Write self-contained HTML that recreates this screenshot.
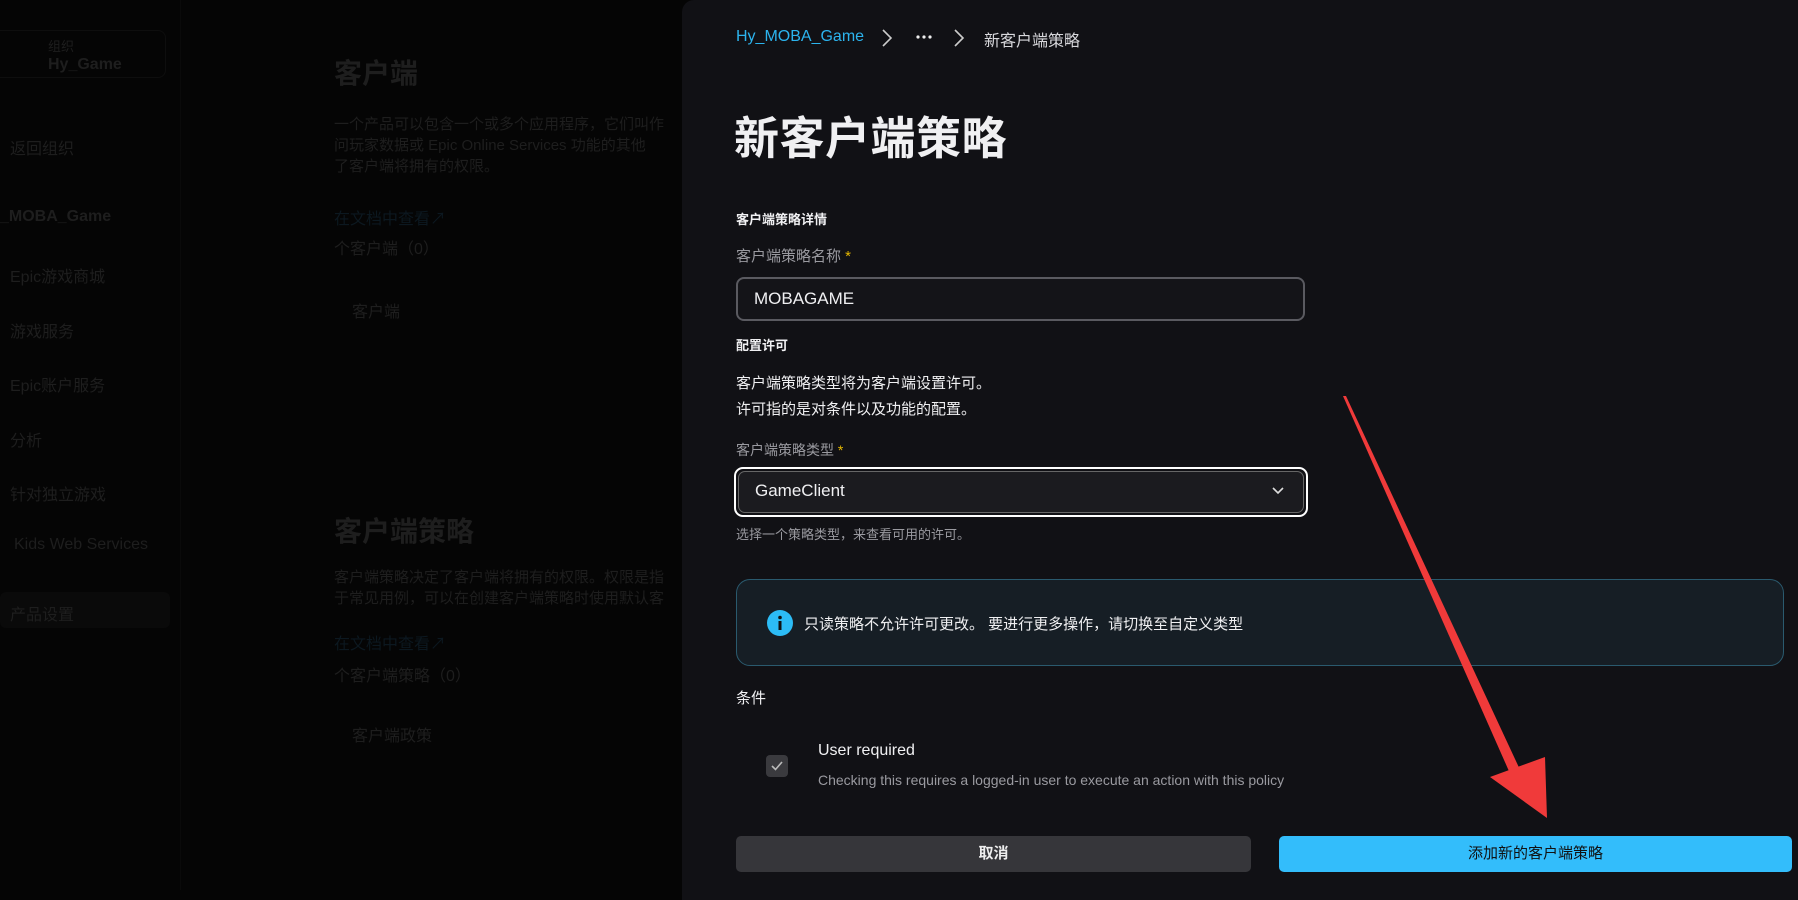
<!DOCTYPE html>
<html><head><meta charset="utf-8"><style>
*{margin:0;padding:0;box-sizing:border-box}
body{width:1798px;height:890px;overflow:hidden;background:#050505;font-family:"Liberation Sans","Noto Sans CJK SC",sans-serif;position:relative}
.a{position:absolute;white-space:nowrap}
.dim{color:#1e1e1e;font-size:16px}
.p{position:absolute;left:682px;top:0;width:1130px;height:900px;background:#111115;border-radius:12px 0 0 0}
.lbl{color:#9a9aa0;font-size:15px}
.star{color:#e6b800}
.w{color:#f0f0f2}
</style></head><body>
<div class="a" style="top:30px;left:-10px;width:176px;height:48px;border:1px solid #0e0e0e;border-radius:8px"></div>
<div class="a dim" style="left:48px;top:36px;font-size:13px">组织</div>
<div class="a dim" style="left:48px;top:56px;font-weight:bold">Hy_Game</div>
<div class="a dim" style="left:10px;top:135px">返回组织</div>
<div class="a dim" style="left:0;top:208px;font-weight:bold">_MOBA_Game</div>
<div class="a dim" style="left:10px;top:263px">Epic游戏商城</div>
<div class="a dim" style="left:10px;top:318px">游戏服务</div>
<div class="a dim" style="left:10px;top:372px">Epic账户服务</div>
<div class="a dim" style="left:10px;top:427px">分析</div>
<div class="a dim" style="left:10px;top:481px">针对独立游戏</div>
<div class="a dim" style="left:14px;top:536px">Kids Web Services</div>
<div class="a" style="left:0;top:592px;width:170px;height:36px;background:#0a0a0a;border-radius:6px"></div>
<div class="a dim" style="left:10px;top:601px">产品设置</div>
<div class="a" style="left:180px;top:0;width:1px;height:890px;background:#0a0a0a"></div>
<div class="a dim" style="left:334px;top:52px;font-size:28px;font-weight:bold">客户端</div>
<div class="a dim" style="left:334px;top:114px;line-height:21px;font-size:15px">一个产品可以包含一个或多个应用程序，它们叫作<br>问玩家数据或 Epic Online Services 功能的其他<br>了客户端将拥有的权限。</div>
<div class="a dim" style="left:334px;top:205px;color:#0c1820">在文档中查看↗</div>
<div class="a dim" style="left:334px;top:235px">个客户端（0）</div>
<div class="a dim" style="left:352px;top:298px">客户端</div>
<div class="a dim" style="left:334px;top:510px;font-size:28px;font-weight:bold">客户端策略</div>
<div class="a dim" style="left:334px;top:567px;line-height:21px;font-size:15px">客户端策略决定了客户端将拥有的权限。权限是指<br>于常见用例，可以在创建客户端策略时使用默认客</div>
<div class="a dim" style="left:334px;top:630px;color:#0c1820">在文档中查看↗</div>
<div class="a dim" style="left:334px;top:662px">个客户端策略（0）</div>
<div class="a dim" style="left:352px;top:722px">客户端政策</div>

<div class="p"></div>
<div class="a" style="left:736px;top:28px;font-size:16px;color:#2cb4ee">Hy_MOBA_Game</div>
<svg class="a" style="left:880px;top:28px" width="14" height="20"><path d="M3 2l8 8-8 8" stroke="#ccc" stroke-width="1.6" fill="none"/></svg>
<svg class="a" style="left:916px;top:34px" width="16" height="6"><circle cx="2" cy="3" r="1.6" fill="#eee"/><circle cx="8" cy="3" r="1.6" fill="#eee"/><circle cx="14" cy="3" r="1.6" fill="#eee"/></svg>
<svg class="a" style="left:952px;top:28px" width="14" height="20"><path d="M3 2l8 8-8 8" stroke="#ccc" stroke-width="1.6" fill="none"/></svg>
<div class="a" style="left:984px;top:27px;font-size:16px;color:#d8d8dc">新客户端策略</div>
<div class="a w" style="left:734px;top:102px;font-size:45px;font-weight:bold;letter-spacing:0.5px">新客户端策略</div>
<div class="a w" style="left:736px;top:209px;font-size:13px;font-weight:bold">客户端策略详情</div>
<div class="a lbl" style="left:736px;top:245px">客户端策略名称 <span class="star">*</span></div>
<div class="a" style="left:736px;top:277px;width:569px;height:44px;border:2px solid #5a5a60;border-radius:8px;background:#141418"></div>
<div class="a w" style="left:754px;top:289px;font-size:17px">MOBAGAME</div>
<div class="a w" style="left:736px;top:335px;font-size:13px;font-weight:bold">配置许可</div>
<div class="a w" style="left:736px;top:371px;font-size:15px;line-height:26px">客户端策略类型将为客户端设置许可。<br>许可指的是对条件以及功能的配置。</div>
<div class="a lbl" style="left:736px;top:440px;font-size:14px">客户端策略类型 <span class="star">*</span></div>
<div class="a" style="left:734px;top:467px;width:574px;height:50px;border:2px solid #fff;border-radius:9px;padding:2px"><div style="width:100%;height:100%;border:1px solid #666;border-radius:7px;background:#1b1b1f"></div></div>
<div class="a w" style="left:755px;top:481px;font-size:17px">GameClient</div>
<svg class="a" style="left:1271px;top:485px" width="14" height="12"><path d="M2 3l5 5 5-5" stroke="#ddd" stroke-width="1.6" fill="none"/></svg>
<div class="a lbl" style="left:736px;top:524px;font-size:13px">选择一个策略类型，来查看可用的许可。</div>
<div class="a" style="left:736px;top:579px;width:1048px;height:87px;border:1px solid #2a5a6e;border-radius:14px;background:#161e25"></div>
<svg class="a" style="left:767px;top:610px" width="26" height="26"><circle cx="13" cy="13" r="13" fill="#2cbcf6"/><rect x="11.5" y="11" width="3" height="9" fill="#111"/><circle cx="13" cy="7.5" r="1.8" fill="#111"/></svg>
<div class="a w" style="left:804px;top:613px;font-size:15px">只读策略不允许许可更改。 要进行更多操作，请切换至自定义类型</div>
<div class="a w" style="left:736px;top:687px;font-size:15px">条件</div>
<div class="a" style="left:766px;top:755px;width:22px;height:22px;background:#3a3a3e;border-radius:4px"></div>
<svg class="a" style="left:769px;top:758px" width="16" height="16"><path d="M3 8l3.5 3.5L13 4" stroke="#bbb" stroke-width="1.6" fill="none"/></svg>
<div class="a w" style="left:818px;top:742px;font-size:16px">User required</div>
<div class="a lbl" style="left:818px;top:772px;font-size:14px">Checking this requires a logged-in user to execute an action with this policy</div>
<div class="a" style="left:736px;top:836px;width:515px;height:36px;background:#36363a;border-radius:5px;color:#eee;font-size:15px;font-weight:bold;text-align:center;line-height:36px">取消</div>
<div class="a" style="left:1279px;top:836px;width:513px;height:36px;background:#33bdfb;border-radius:5px;color:#111;font-size:15px;text-align:center;line-height:36px">添加新的客户端策略</div>
<svg class="a" style="left:0;top:0" width="1798" height="890"><polygon points="1343,396 1346,396 1522,774 1512,778" fill="#f03a3a"/><polygon points="1490,777 1545,757 1547,818" fill="#f03a3a"/></svg>
</body></html>
